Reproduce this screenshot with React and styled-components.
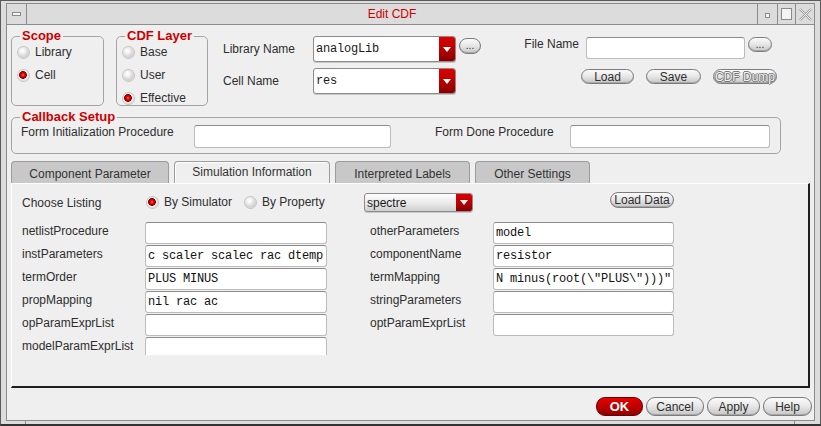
import React from "react";
import styled, { createGlobalStyle } from "styled-components";

const SANS = `"Liberation Sans", Arial, sans-serif`;
const MONO = `"Liberation Mono", "Courier New", monospace`;

const GlobalStyle = createGlobalStyle`
  html, body { margin: 0; padding: 0; background: #efefef; }
  * { box-sizing: border-box; }
`;

const Window = styled.div`
  width: 821px;
  height: 426px;
  display: flex;
  flex-direction: column;
  background: #dcdcdc;
  border: 1px solid #5a5a5a;
  border-bottom: 2px solid #333;
  padding: 2px 5px 0 5px;
  font-family: ${SANS};
  font-size: 12px;
  color: #2e2e2e;
`;

const TitleBar = styled.div`
  height: 22px;
  flex: none;
  display: flex;
  border: 1px solid #8c8c8c;
  background: #dcdcdc;
`;

const TitleBox = styled.div`
  width: ${p => p.$w}px;
  flex: none;
  display: flex;
  align-items: center;
  justify-content: center;
  border-left: ${p => (p.$left ? "none" : "1px solid #8c8c8c")};
  border-right: ${p => (p.$left ? "1px solid #8c8c8c" : "none")};
`;

const TitleText = styled.div`
  flex: 1;
  text-align: center;
  line-height: 20px;
  color: #cc0000;
  font-size: 12px;
`;

const MiniRect = styled.span`
  width: ${p => p.$w}px;
  height: ${p => p.$h}px;
  border: 1px solid #8a8a8a;
  background: #f4f4f4;
  margin-top: ${p => p.$mt || 0}px;
`;

const Body = styled.div`
  flex: 1;
  display: flex;
  flex-direction: column;
  background: #efefef;
  border: 1px solid #8c8c8c;
  border-top: none;
  padding: 4px 0 0 4px;
`;

const BottomFrame = styled.div`
  height: 3px;
  flex: none;
  display: flex;
  justify-content: space-between;
  margin: 0 -5px;
`;

const FrameMark = styled.span`
  width: ${p => p.$w}px;
  border-right: ${p => (p.$right ? "none" : "1px solid #8c8c8c")};
  border-left: ${p => (p.$right ? "1px solid #8c8c8c" : "none")};
`;

const TopRow = styled.div`
  display: flex;
  align-items: flex-start;
`;

const Group = styled.fieldset`
  margin: ${p => p.$m || "0"};
  padding: 0 0 ${p => p.$pb || 0}px 6px;
  border: 1px solid #a4a4a4;
  border-radius: 5px;
  width: ${p => p.$w}px;
  min-width: 0;
  flex: none;
`;

const GroupTitle = styled.legend`
  margin-left: 2px;
  padding: 0 2px;
  font: bold 13px/14px ${SANS};
  color: #cc0000;
`;

const RadioStack = styled.div`
  height: 62px;
  padding-top: 1px;
  display: flex;
  flex-direction: column;
  gap: 7px;
`;

const RadioItem = styled.div`
  display: flex;
  align-items: center;
  gap: 6px;
  flex: none;
  height: ${p => p.$h || 16}px;
  width: ${p => (p.$w ? `${p.$w}px` : "auto")};
  margin-left: ${p => p.$ml || 0}px;
  white-space: nowrap;
`;

const RadioDot = styled.span`
  width: 11px;
  height: 11px;
  flex: none;
  border-radius: 50%;
  box-shadow: 0 0 0 1px #c4c4c4;
  background: ${p =>
    p.$on
      ? "radial-gradient(circle at 45% 45%, #ff5a5a 0, #d40000 2px, #8c0000 3.6px, #f6f6f6 4.2px, #d8d8d8 6px)"
      : "radial-gradient(circle at 40% 35%, #ffffff 0, #f6f6f6 2px, #d2d2d2 6px)"};
`;

const LibCol = styled.div`
  margin: 7px 0 0 15px;
  display: flex;
  flex-direction: column;
  gap: 6px;
`;

const LibRow = styled.div`
  display: flex;
  align-items: center;
  height: 26px;
`;

const FieldLabel = styled.div`
  width: ${p => p.$w}px;
  flex: none;
  line-height: 15px;
  margin-top: ${p => p.$mt || 0}px;
  margin-left: ${p => p.$ml || 0}px;
  text-align: ${p => (p.$right ? "right" : "left")};
  padding-right: ${p => (p.$right ? 7 : 0)}px;
  white-space: nowrap;
`;

const Combo = styled.div`
  display: flex;
  flex: none;
  width: ${p => p.$w}px;
  height: ${p => p.$h}px;
  margin-top: ${p => p.$mt || 0}px;
  border: 1px solid #8c8c8c;
  border-radius: 3px;
  overflow: hidden;
  background: ${p => (p.$grey ? "linear-gradient(#ffffff, #e6e6e6 60%, #cfcfcf)" : "#fff")};
  box-shadow: 0 1px 0 #c8c8c8;
`;

const ComboText = styled.div`
  flex: 1;
  display: flex;
  align-items: center;
  padding-left: 2px;
  font-family: ${p => (p.$sans ? SANS : MONO)};
  letter-spacing: ${p => (p.$sans ? 0 : -0.2)}px;
  font-size: 12px;
  color: #1a1a1a;
`;

const ComboArrow = styled.div`
  width: 16px;
  flex: none;
  display: flex;
  align-items: center;
  justify-content: center;
  background: linear-gradient(#e00000, #b00000 60%, #880000);
  &::after {
    content: "";
    border-left: 4px solid transparent;
    border-right: 4px solid transparent;
    border-top: 5px solid #fff;
  }
`;

const Pill = styled.button`
  flex: none;
  width: ${p => p.$w}px;
  height: ${p => p.$h || 15}px;
  margin: ${p => p.$m || "0"};
  align-self: flex-start;
  padding: 0;
  border: 1px solid #7c7c7c;
  border-radius: 9px;
  background: linear-gradient(#fbfbfb, #e6e6e6 50%, #c6c6c6);
  box-shadow: inset 0 -1px 0 #a8a8a8;
  font-family: ${SANS};
  font-size: ${p => p.$fs || 12}px;
  line-height: 1;
  color: ${p => (p.$off ? "#efefef" : "#2e2e2e")};
  text-shadow: ${p =>
    p.$off ? "1px 0 0 #7a7a7a, -1px 0 0 #7a7a7a, 0 1px 0 #7a7a7a, 0 -1px 0 #7a7a7a" : "none"};
  white-space: nowrap;
  overflow: visible;
  display: flex;
  align-items: center;
  justify-content: center;
`;

const OkButton = styled(Pill)`
  background: linear-gradient(#e60000, #c00000 50%, #8e0000);
  border-color: #6a0000;
  box-shadow: none;
  color: #fff;
  font-weight: bold;
  font-size: 13px;
`;

const FileCol = styled.div`
  margin: 8px 0 0 42px;
  display: flex;
  flex-direction: column;
`;

const FileRow = styled.div`
  display: flex;
  align-items: flex-start;
`;

const ButtonRow = styled.div`
  display: flex;
  gap: 12px;
  margin-top: 10px;
  padding-left: 58px;
`;

const TextBox = styled.div`
  flex: none;
  width: ${p => p.$w}px;
  height: ${p => p.$h || 22}px;
  background: #fff;
  border: 1px solid #bcbcbc;
  border-top-color: #8c8c8c;
  border-radius: 3px;
  padding: 0 1px 0 2px;
  font-family: ${MONO};
  font-size: 12px;
  letter-spacing: -0.2px;
  line-height: 21px;
  color: #111;
  white-space: nowrap;
  overflow: hidden;
`;

const CallbackRow = styled.div`
  display: flex;
  align-items: flex-start;
  padding: 1px 0 0 3px;
`;

const TabRow = styled.div`
  display: flex;
  gap: 5px;
  margin-top: 7px;
`;

const Tab = styled.div`
  width: ${p => p.$w}px;
  height: 22px;
  flex: none;
  border: 1px solid #9c9c9c;
  border-bottom: none;
  border-radius: 4px 4px 0 0;
  background: ${p => (p.$active ? "#efefef" : "#c8c8c8")};
  box-shadow: ${p => (p.$active ? "inset 1px 1px 0 #ffffff" : "none")};
  text-align: center;
  line-height: ${p => (p.$active ? 21 : 24)}px;
  color: #333;
`;

const Panel = styled.div`
  width: 799px;
  height: 205px;
  flex: none;
  border-top: 1px solid #fff;
  border-left: 1px solid #fff;
  border-right: 2px solid #1e1e1e;
  border-bottom: 2px solid #1e1e1e;
  padding: 8px 0 0 10px;
`;

const ChooseRow = styled.div`
  display: flex;
  align-items: flex-start;
  height: 20px;
`;

const FieldGrid = styled.div`
  display: flex;
  gap: 43px;
  margin-top: 10px;
  height: 133px;
  overflow: hidden;
`;

const FieldCol = styled.div`
  display: flex;
  flex-direction: column;
  gap: 1px;
`;

const FieldRow = styled.div`
  display: flex;
  align-items: flex-start;
  height: 22px;
  flex: none;
`;

const Footer = styled.div`
  display: flex;
  justify-content: flex-end;
  gap: 3px;
  margin-top: 9px;
  padding-right: 2px;
`;

const leftFields = [
  ["netlistProcedure", ""],
  ["instParameters", "c scaler scalec rac dtemp"],
  ["termOrder", "PLUS MINUS"],
  ["propMapping", "nil rac ac"],
  ["opParamExprList", ""],
  ["modelParamExprList", ""],
];

const rightFields = [
  ["otherParameters", "model"],
  ["componentName", "resistor"],
  ["termMapping", 'N minus(root(\\"PLUS\\")))"'],
  ["stringParameters", ""],
  ["optParamExprList", ""],
];

const tabs = [
  ["Component Parameter", 158],
  ["Simulation Information", 156],
  ["Interpreted Labels", 135],
  ["Other Settings", 115],
];

function Radio({ on, children, ...rest }) {
  return (
    <RadioItem {...rest}>
      <RadioDot $on={on} />
      {children}
    </RadioItem>
  );
}

function Fields({ rows, width }) {
  return (
    <FieldCol>
      {rows.map(([label, value]) => (
        <FieldRow key={label}>
          <FieldLabel $w={123} $mt={2}>{label}</FieldLabel>
          <TextBox $w={width}>{value}</TextBox>
        </FieldRow>
      ))}
    </FieldCol>
  );
}

export default function App() {
  return (
    <>
      <GlobalStyle />
      <Window>
        <TitleBar>
          <TitleBox $w={20} $left>
            <MiniRect $w={9} $h={4} />
          </TitleBox>
          <TitleText>Edit CDF</TitleText>
          <TitleBox $w={20}>
            <MiniRect $w={5} $h={5} $mt={3} />
          </TitleBox>
          <TitleBox $w={18}>
            <MiniRect $w={11} $h={12} />
          </TitleBox>
          <TitleBox $w={19}>
            <svg width="13" height="13" viewBox="0 0 13 13">
              <path d="M1 1 L12 12 M12 1 L1 12" stroke="#9a9a9a" strokeWidth="2.4" />
              <path d="M1 1 L12 12 M12 1 L1 12" stroke="#f2f2f2" strokeWidth="1" />
            </svg>
          </TitleBox>
        </TitleBar>

        <Body>
          <TopRow>
            <Group $w={93}>
              <GroupTitle>Scope</GroupTitle>
              <RadioStack>
                <Radio>Library</Radio>
                <Radio on>Cell</Radio>
              </RadioStack>
            </Group>
            <Group $w={92} $m="0 0 0 12px">
              <GroupTitle>CDF Layer</GroupTitle>
              <RadioStack>
                <Radio>Base</Radio>
                <Radio>User</Radio>
                <Radio on>Effective</Radio>
              </RadioStack>
            </Group>

            <LibCol>
              <LibRow>
                <FieldLabel $w={90}>Library Name</FieldLabel>
                <Combo $w={143} $h={26}>
                  <ComboText>analogLib</ComboText>
                  <ComboArrow />
                </Combo>
                <Pill $w={22} $h={16} $m="2px 0 0 3px" $fs={10}>...</Pill>
              </LibRow>
              <LibRow>
                <FieldLabel $w={90}>Cell Name</FieldLabel>
                <Combo $w={143} $h={26}>
                  <ComboText>res</ComboText>
                  <ComboArrow />
                </Combo>
              </LibRow>
            </LibCol>

            <FileCol>
              <FileRow>
                <FieldLabel $w={63} $right>File Name</FieldLabel>
                <TextBox $w={159} />
                <Pill $w={24} $h={15} $m="0 0 0 3px" $fs={10}>...</Pill>
              </FileRow>
              <ButtonRow>
                <Pill $w={53}>Load</Pill>
                <Pill $w={55}>Save</Pill>
                <Pill $w={64} $off>CDF Dump</Pill>
              </ButtonRow>
            </FileCol>
          </TopRow>

          <Group $w={770} $pb={5} $m="4px 0 0 0">
            <GroupTitle>Callback Setup</GroupTitle>
            <CallbackRow>
              <FieldLabel $w={173}>Form Initialization Procedure</FieldLabel>
              <TextBox $w={197} $h={23} />
              <FieldLabel $w={135} $ml={44}>Form Done Procedure</FieldLabel>
              <TextBox $w={200} $h={23} />
            </CallbackRow>
          </Group>

          <TabRow>
            {tabs.map(([name, w]) => (
              <Tab key={name} $w={w} $active={name === "Simulation Information"}>
                {name}
              </Tab>
            ))}
          </TabRow>

          <Panel>
            <ChooseRow>
              <FieldLabel $w={123} $mt={4}>Choose Listing</FieldLabel>
              <Radio on $h={20} $w={98} $ml={2}>By Simulator</Radio>
              <Radio $h={20} $w={119}>By Property</Radio>
              <Combo $w={109} $h={19} $mt={1} $grey>
                <ComboText $sans>spectre</ComboText>
                <ComboArrow />
              </Combo>
              <Pill $w={64} $h={16} $m="0 0 0 137px">Load Data</Pill>
            </ChooseRow>
            <FieldGrid>
              <Fields rows={leftFields} width={182} />
              <Fields rows={rightFields} width={181} />
            </FieldGrid>
          </Panel>

          <Footer>
            <OkButton $w={47} $h={19}>OK</OkButton>
            <Pill $w={58} $h={19}>Cancel</Pill>
            <Pill $w={53} $h={19}>Apply</Pill>
            <Pill $w={49} $h={19}>Help</Pill>
          </Footer>
        </Body>
        <BottomFrame>
          <FrameMark $w={25} />
          <FrameMark $w={26} $right />
        </BottomFrame>
      </Window>
    </>
  );
}
